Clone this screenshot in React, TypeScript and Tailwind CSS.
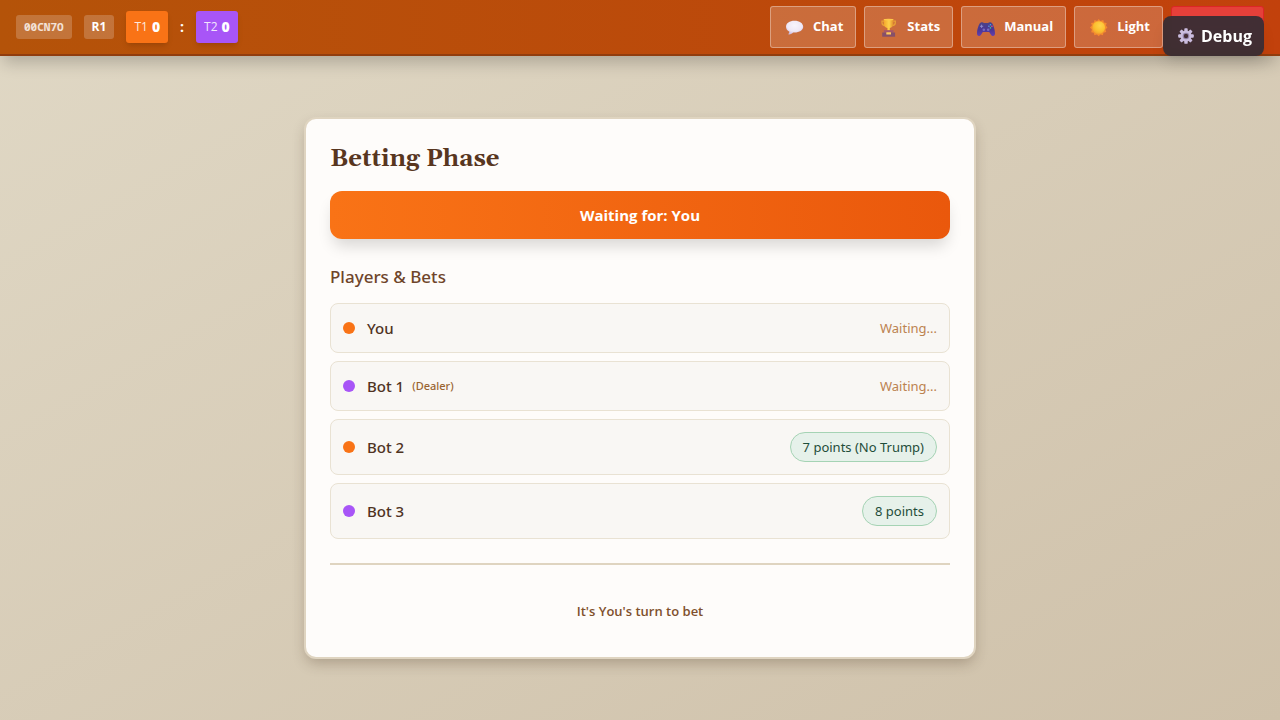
import type { ReactNode } from 'react';

type Team = 1 | 2;

interface Player {
  name: string;
  team: Team;
  dealer?: boolean;
  bet?: string;
}

const players: Player[] = [
  { name: 'You', team: 1 },
  { name: 'Bot 1', team: 2, dealer: true },
  { name: 'Bot 2', team: 1, bet: '7 points (No Trump)' },
  { name: 'Bot 3', team: 2, bet: '8 points' },
];

function ChatIcon() {
  return (
    <svg width="22" height="22" viewBox="0 0 22 22" aria-hidden="true">
      <defs>
        <radialGradient id="bubble" cx="0.5" cy="0.35" r="0.65">
          <stop offset="0" stopColor="#f8f5fc" />
          <stop offset="0.65" stopColor="#efe8f6" />
          <stop offset="1" stopColor="#cdbce0" />
        </radialGradient>
      </defs>
      <path d="M11.500 4.700C6.500 4.700 3 7.200 3 10.700c0 2.200 1.300 3.900 3.400 5-.1.900-.4 1.500-.9 2.100-.3.400 0 .700.500.600 1.900-.300 3.200-1 4.100-2l1.400.1c5 0 8.700-2.400 8.700-5.800s-3.700-6-8.700-6z" fill="url(#bubble)" />
    </svg>
  );
}

function TrophyIcon() {
  return (
    <svg width="22" height="22" viewBox="0 0 22 22" aria-hidden="true">
      <defs>
        <linearGradient id="cup" x1="0" x2="1">
          <stop offset="0" stopColor="#f3a52b" />
          <stop offset="0.55" stopColor="#ffd24a" />
          <stop offset="1" stopColor="#e08a2c" />
        </linearGradient>
      </defs>
      <path d="M7 5.200H5v1.600c0 1.700 1.100 2.700 3 2.700M16 5.200h2.300v1.600c0 1.700-1.200 2.700-3.100 2.700" fill="none" stroke="#e8a136" strokeWidth="1.300" />
      <path d="M6.700 3.300h9.800v4.300c0 2.400-1.600 3.900-3.700 4.500v2.500h-2.400v-2.500c-2.100-.6-3.700-2.100-3.700-4.500z" fill="url(#cup)" />
      <ellipse cx="11.600" cy="3.600" rx="4.900" ry="0.900" fill="#ffc94a" />
      <path d="M6.800 14.200h9.700v2.500H6.800z" fill="#a5566b" />
      <path d="M5.200 16.500h12.900v4.200H5.200z" fill="#85506a" />
      <rect x="9.300" y="16.200" width="4.700" height="2.400" rx="0.300" fill="#ffc95a" />
    </svg>
  );
}

function GamepadIcon() {
  return (
    <svg width="22" height="22" viewBox="0 0 22 22" aria-hidden="true">
      <defs>
        <linearGradient id="pad" x1="0" y1="0" x2="0" y2="1">
          <stop offset="0" stopColor="#4b4387" />
          <stop offset="0.55" stopColor="#4a3594" />
          <stop offset="1" stopColor="#6740ad" />
        </linearGradient>
      </defs>
      <g transform="translate(1 1.500)">
        <path d="M5.500 5.300c1.200-.7 2.600-.6 3.400.1h4.200c.8-.7 2.200-.8 3.400-.1 1.700 1 3.400 6.500 3.500 10.500.1 3.100-2.500 3.700-4.200 1.200l-1.600-2.400H7.800L6.200 17c-1.700 2.500-4.300 1.900-4.200-1.200.1-4 1.800-9.500 3.500-10.500z" fill="url(#pad)" />
        <path d="M5 8.800h3.200M6.600 7.200v3.200" stroke="#918fd0" strokeWidth="0.900" />
        <circle cx="8.800" cy="12.300" r="1.300" fill="#776bc0" />
        <circle cx="13.200" cy="12.300" r="1.300" fill="#776bc0" />
        <circle cx="15.400" cy="7.200" r="0.800" fill="#36a8ec" />
        <circle cx="13.900" cy="8.800" r="0.800" fill="#579bea" />
        <circle cx="16.900" cy="8.800" r="0.800" fill="#e75777" />
        <circle cx="15.400" cy="10.400" r="0.800" fill="#42bd82" />
      </g>
    </svg>
  );
}

function SunIcon() {
  return (
    <svg width="22" height="22" viewBox="0 0 22 22" aria-hidden="true">
      <defs>
        <radialGradient id="sun" cx="0.6" cy="0.35" r="0.7">
          <stop offset="0" stopColor="#ffd34a" />
          <stop offset="0.6" stopColor="#fcc02f" />
          <stop offset="1" stopColor="#f2a22d" />
        </radialGradient>
      </defs>
      <g transform="translate(1.600 1.400) scale(0.920)">
        <path d="M11 1.800l2 2.200 2.900-1.100.8 2.700 3 .5-.9 2.700 1.700 2.200-2.100 2.100.8 2.900-3 .7-.7 2.800-2.700-.8-1.800 1.900-2-2-2.700.9-.7-2.800-2.800-.6.8-2.900L1.500 11l2.100-2.100-.9-2.800 3-.6.8-2.700 2.700 1.100z" fill="#f58b2e" />
        <circle cx="11" cy="11" r="6.900" fill="url(#sun)" />
      </g>
    </svg>
  );
}

function GearIcon() {
  return (
    <svg width="22" height="22" viewBox="0 0 22 22" aria-hidden="true">
      <g fill="#cbbddf">
        <rect x="9.300" y="3.200" width="3.400" height="15.600" rx="0.900" />
        <rect x="9.300" y="3.200" width="3.400" height="15.600" rx="0.900" transform="rotate(45 11 11)" />
        <rect x="9.300" y="3.200" width="3.400" height="15.600" rx="0.900" transform="rotate(90 11 11)" />
        <rect x="9.300" y="3.200" width="3.400" height="15.600" rx="0.900" transform="rotate(135 11 11)" />
        <circle cx="11" cy="11" r="5.500" />
      </g>
      <circle cx="11" cy="11" r="3.300" fill="#9585ac" />
      <circle cx="11" cy="11" r="2.200" fill="#452e35" />
    </svg>
  );
}

function NavButton({ icon, children }: { icon: ReactNode; children: ReactNode }) {
  return (
    <button
      type="button"
      className="flex h-[42px] items-center gap-2 rounded-[3px] border border-white/35 bg-white/20 px-3 text-[13px] font-bold text-white"
    >
      {icon}
      {children}
    </button>
  );
}

function TeamScore({ team, score }: { team: Team; score: number }) {
  return (
    <div
      className={`flex h-8 items-center gap-1 rounded-[3px] px-2 text-white shadow-md ${team === 1 ? 'bg-[#f97316]' : 'bg-[#a855f7]'}`}
    >
      <span className="text-xs opacity-85">T{team}</span>
      <span className="text-sm font-extrabold">{score}</span>
    </div>
  );
}

function PlayerRow({ player }: { player: Player }) {
  return (
    <li className="flex items-center justify-between rounded-lg border border-[#e9e2d3] bg-[#f9f7f4] p-3">
      <div className="flex items-center gap-3">
        <span className={`size-3 rounded-full ${player.team === 1 ? 'bg-[#f97316]' : 'bg-[#a855f7]'}`} />
        <div className="flex items-center gap-2 font-['Noto_Sans','Open_Sans',sans-serif] font-medium">
          <span className="text-[15px] leading-6 text-[#50331f]">{player.name}</span>
          {player.dealer && <span className="text-[11px] leading-6 text-[#9a6532]">(Dealer)</span>}
        </div>
      </div>
      {player.bet ? (
        <span className="rounded-full border border-[#a5d3b4] bg-[#e6f1ea] px-3 py-1 font-['Noto_Sans','Open_Sans',sans-serif] text-[13px] leading-5 text-[#1f4d3a]">
          {player.bet}
        </span>
      ) : (
        <span className="font-['Noto_Sans','Open_Sans',sans-serif] text-[13px] leading-5 text-[#bc8250]">
          Waiting...
        </span>
      )}
    </li>
  );
}

export default function App() {
  return (
    <div className="flex min-h-screen flex-col bg-linear-to-br from-[#e0d8c5] to-[#cfc1aa] font-['Open_Sans','Noto_Sans',sans-serif]">
      <header className="flex items-center justify-between border-b-2 border-[#913d0e] bg-linear-to-r from-[#b45309] to-[#c2410c] px-4 py-1.5 shadow-[0_10px_15px_-3px_rgba(0,0,0,0.2)]">
        <div className="flex items-center gap-3">
          <span className="rounded-[3px] bg-white/20 px-2 py-1 font-['Noto_Sans_Mono','DejaVu_Sans_Mono',monospace] text-[11px] leading-4 font-bold text-white/80">
            00CN7O
          </span>
          <span className="rounded-[3px] bg-white/20 px-2 py-1 text-xs leading-4 font-bold text-white">R1</span>
          <TeamScore team={1} score={0} />
          <span className="text-sm font-bold text-white">:</span>
          <TeamScore team={2} score={0} />
        </div>
        <nav className="flex items-center gap-2" aria-label="Game">
          <NavButton icon={<ChatIcon />}>Chat</NavButton>
          <NavButton icon={<TrophyIcon />}>Stats</NavButton>
          <NavButton icon={<GamepadIcon />}>Manual</NavButton>
          <NavButton icon={<SunIcon />}>Light</NavButton>
          <button
            type="button"
            aria-label="Leave"
            className="h-[42px] w-[93px] rounded-[3px] border border-[#dc2626] bg-[#e5403a]"
          />
        </nav>
      </header>

      <button
        type="button"
        className="fixed top-4 right-4 z-10 flex h-10 items-center gap-1 rounded-lg bg-[#352d34]/93 px-3 text-base font-bold text-white shadow-lg backdrop-blur-sm"
      >
        <GearIcon />
        Debug
      </button>

      <main className="flex flex-1 items-center justify-center p-4">
        <section className="w-full max-w-2xl rounded-xl border-2 border-[#dfd4c0] bg-[#fefcfa] p-6 shadow-[0_6px_14px_-2px_rgba(60,40,20,0.28)]">
          <h1 className="mb-4 font-[Georgia,Gelasio,'Liberation_Serif',serif] text-2xl leading-8 font-bold text-[#58361f]">
            Betting Phase
          </h1>
          <div className="mb-6 rounded-xl bg-linear-to-r from-[#f97316] to-[#ea580c] p-3 text-center text-[15px] leading-6 font-bold text-white shadow-[0_10px_15px_-3px_rgba(0,0,0,0.15)]">
            Waiting for: You
          </div>
          <h2 className="mb-3 font-['Noto_Sans','Open_Sans',sans-serif] text-[17px] leading-7 font-medium text-[#6f452a]">
            Players &amp; Bets
          </h2>
          <ul className="mb-6 flex flex-col gap-2">
            {players.map((player) => (
              <PlayerRow key={player.name} player={player} />
            ))}
          </ul>
          <div className="border-t-2 border-[#dfd4c0] pt-6">
            <p className="py-3 text-center text-[13px] leading-5 font-semibold text-[#80502c]">
              It&#39;s You&#39;s turn to bet
            </p>
          </div>
        </section>
      </main>
    </div>
  );
}
